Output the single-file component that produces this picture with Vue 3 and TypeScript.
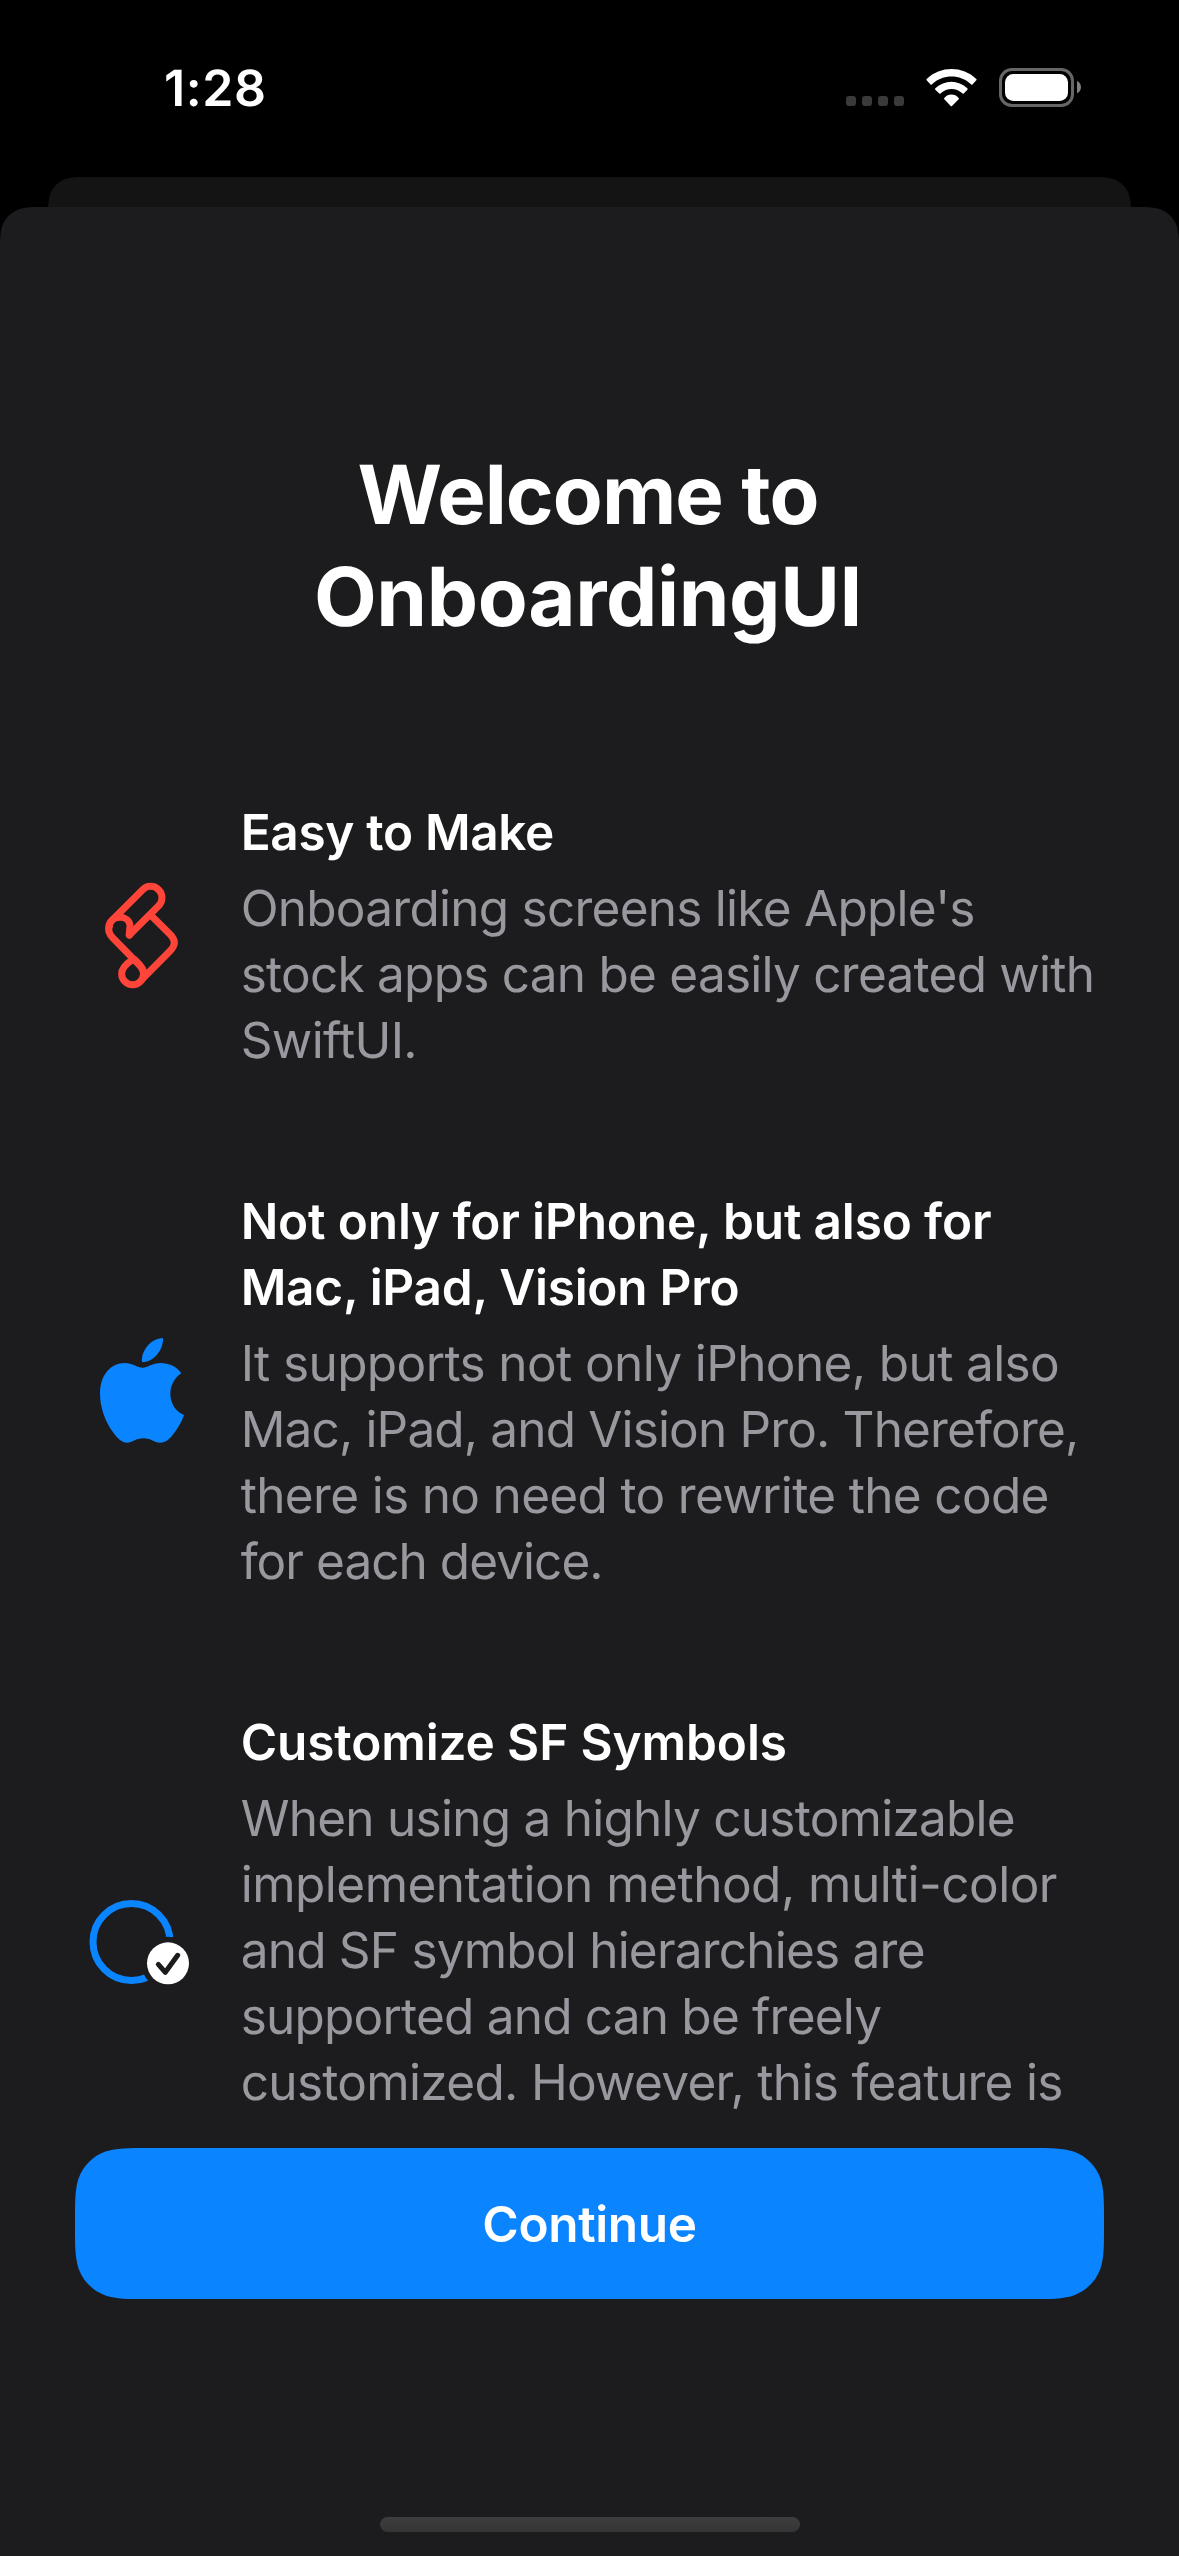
<script setup lang="ts">
interface Line {
  text: string
  tracking: number
}
interface Feature {
  icon: 'scroll' | 'apple' | 'badge'
  title: Line[]
  body: Line[]
}

const heading: Line[] = [
  { text: 'Welcome to', tracking: -0.95 },
  { text: 'OnboardingUI', tracking: -0.36 },
]

const features: Feature[] = [
  {
    icon: 'scroll',
    title: [{ text: 'Easy to Make', tracking: -0.32 }],
    body: [
      { text: "Onboarding screens like Apple's", tracking: -0.74 },
      { text: 'stock apps can be easily created with', tracking: -0.75 },
      { text: 'SwiftUI.', tracking: -0.65 },
    ],
  },
  {
    icon: 'apple',
    title: [
      { text: 'Not only for iPhone, but also for', tracking: -0.15 },
      { text: 'Mac, iPad, Vision Pro', tracking: -0.24 },
    ],
    body: [
      { text: 'It supports not only iPhone, but also', tracking: -0.61 },
      { text: 'Mac, iPad, and Vision Pro. Therefore,', tracking: -0.84 },
      { text: 'there is no need to rewrite the code', tracking: -0.66 },
      { text: 'for each device.', tracking: -0.95 },
    ],
  },
  {
    icon: 'badge',
    title: [{ text: 'Customize SF Symbols', tracking: -0.11 }],
    body: [
      { text: 'When using a highly customizable', tracking: -0.75 },
      { text: 'implementation method, multi-color', tracking: -0.51 },
      { text: 'and SF symbol hierarchies are', tracking: -0.78 },
      { text: 'supported and can be freely', tracking: -0.79 },
      { text: 'customized. However, this feature is', tracking: -0.68 },
    ],
  },
]

const track = (line: Line) => ({ letterSpacing: `${line.tracking}px` })

// Continuous-curvature rounded rectangle; the bottom corners are optional.
function smoothRect(w: number, h: number, r: number, bottom: boolean): string {
  const a = 1.52866 * r
  const b = 1.08849 * r
  const c = 0.86841 * r
  const d = 0.63149 * r
  const e = 0.07491 * r
  const f = 0.37282 * r
  const g = 0.16906 * r
  const top =
    `M0 ${a}C0 ${b} 0 ${c} ${e} ${d}C${g} ${f} ${f} ${g} ${d} ${e}C${c} 0 ${b} 0 ${a} 0` +
    `L${w - a} 0C${w - b} 0 ${w - c} 0 ${w - d} ${e}C${w - f} ${g} ${w - g} ${f} ${w - e} ${d}C${w} ${c} ${w} ${b} ${w} ${a}`
  const end = bottom
    ? `L${w} ${h - a}C${w} ${h - b} ${w} ${h - c} ${w - e} ${h - d}C${w - g} ${h - f} ${w - f} ${h - g} ${w - d} ${h - e}C${w - c} ${h} ${w - b} ${h} ${w - a} ${h}` +
      `L${a} ${h}C${b} ${h} ${c} ${h} ${d} ${h - e}C${f} ${h - g} ${g} ${h - f} ${e} ${h - d}C0 ${h - c} 0 ${h - b} 0 ${h - a}Z`
    : `L${w} ${h}L0 ${h}Z`
  return `path('${top}${end}')`
}

const backClip = { clipPath: smoothRect(1083, 60, 27.6, false) }
const sheetClip = { clipPath: smoothRect(1179, 2349, 30, false) }
const buttonClip = { clipPath: smoothRect(1029, 151, 48, true) }
</script>

<template>
  <div class="screen">
    <header class="status">
      <span class="time">1:28</span>
      <svg class="indicators" width="240" height="46" viewBox="0 0 720 138">
        <g fill="#3a3a3a">
          <rect v-for="x in [0, 48, 96, 144]" :key="x" :x="x + 3" y="93" width="30" height="30" rx="9" />
        </g>
        <g fill="#fff" transform="translate(-135 -105)">
          <path d="M380 147C421 107 488 107 529 147Q531 149 529 151L518 163Q516 166 513 163C480 132 429 132 396 163Q393 166 391 163L380 151Q378 149 380 147Z" />
          <path d="M406 175C433 149 475 149 502 175Q504 177 502 179L492 190Q490 193 487 190C468 173 441 173 422 190Q419 193 417 190L406 179Q404 177 406 175Z" />
          <path d="M433 204C444 190 465 190 476 204Q478 206 476 208L456 228Q454 230 452 228L433 208Q431 206 433 204Z" />
        </g>
        <g transform="translate(-135 -105)">
          <rect x="601.5" y="118.500" width="216" height="108" rx="34" fill="none" stroke="#666" stroke-width="9" />
          <rect x="615" y="132" width="189" height="81" rx="25" fill="#fff" />
          <path d="M831 153C847 159 847 184 831 190Z" fill="#808080" />
        </g>
      </svg>
    </header>

    <div class="back-card" :style="backClip"></div>

    <main class="sheet" :style="sheetClip">
      <h1 class="heading">
        <span v-for="line in heading" :key="line.text" class="line" :style="track(line)">{{ line.text }}</span>
      </h1>

      <section class="features">
        <article v-for="item in features" :key="item.icon" class="feature" :class="item.icon">
          <div class="icon">
            <svg v-if="item.icon === 'scroll'" width="130" height="150" viewBox="0 0 390 450">
              <g fill="none" stroke="#ff453a" stroke-width="21" stroke-linecap="round" stroke-linejoin="round">
                <path d="M148 225L236 137A33.500 33.500 0 0 0 188 89L97 180C82 194 82 216 97 232L181 318C192 330 191 341 190 344" />
                <path d="M88 200C89 163 149 163 150 198C150 206 147 214 148 225" />
                <path d="M215 168L270 223C287 240 287 256 270 273L183 361" stroke-linecap="butt" />
                <path d="M157 299C147 306 125 319 125 341A33 33 0 0 0 191 341C191 328 178 312 164 299" />
              </g>
            </svg>
            <svg v-else-if="item.icon === 'apple'" width="130" height="150" viewBox="0 0 390 450">
              <g fill="#0a84ff">
                <path d="M249 54C250 72 243 90 231 104C219 118 202 127 186 126C184 108 191 91 203 77C215 63 232 55 249 54Z" />
                <path d="M304 160C290 139 266 129 242 129C218 129 203 143 188 143C172 143 158 129 134 129C94 129 60 163 60 222C60 262 76 304 97 334C114 358 126 368 141 368C157 368 167 355 190 355C214 355 222 368 240 368C260 368 271 355 287 333C300 314 308 298 312 285C288 275 271 251 271 221C271 196 284 173 304 160Z" />
              </g>
            </svg>
            <svg v-else width="140" height="130" viewBox="0 0 420 390">
              <circle cx="184.500" cy="186" r="115.500" fill="none" stroke="#0a84ff" stroke-width="21" />
              <circle cx="294" cy="250" r="79.500" fill="#1c1c1e" />
              <circle cx="294" cy="250" r="63" fill="#fff" />
              <path d="M265 253L286 277L323 226" fill="none" stroke="#1c1c1e" stroke-width="15" stroke-linecap="round" stroke-linejoin="round" />
            </svg>
          </div>
          <div class="copy">
            <h2 class="title">
              <span v-for="line in item.title" :key="line.text" class="line" :style="track(line)">{{ line.text }}</span>
            </h2>
            <p class="body">
              <span v-for="line in item.body" :key="line.text" class="line" :style="track(line)">{{ line.text }}</span>
            </p>
          </div>
        </article>
      </section>

      <footer class="footer">
        <button class="continue" :style="buttonClip" type="button">Continue</button>
        <div class="home"></div>
      </footer>
    </main>
  </div>
</template>

<style>
body {
  margin: 0;
  background: #000;
}
</style>

<style scoped>
.screen {
  display: flex;
  flex-direction: column;
  align-items: center;
  width: 1179px;
  height: 2556px;
  overflow: hidden;
  background: #000;
  color: #fff;
  font-family: Inter, 'Liberation Sans', sans-serif;
  text-rendering: geometricPrecision;
}
.status {
  box-sizing: border-box;
  display: flex;
  flex: none;
  justify-content: space-between;
  align-items: flex-start;
  width: 100%;
  height: 177px;
  padding: 58px 94px 0 164px;
}
.time {
  margin-top: 1px;
  font-size: 50px;
  font-weight: 600;
  line-height: 60px;
  letter-spacing: 0.6px;
}
.indicators {
  margin-top: 7px;
}
.back-card {
  flex: none;
  width: 1083px;
  height: 60px;
  margin-bottom: -30px;
  background: #141414;
}
.sheet {
  box-sizing: border-box;
  display: flex;
  flex: none;
  flex-direction: column;
  width: 100%;
  height: 2349px;
  padding-top: 237px;
  background: #1c1c1e;
}
.heading {
  margin: 0;
  padding-right: 3px;
  font-size: 81.5px;
  font-weight: 700;
  line-height: 102px;
  text-align: center;
}
.line {
  display: block;
  white-space: nowrap;
}
.features {
  display: flex;
  flex-direction: column;
  gap: 115px;
  height: 1349px;
  margin-top: 151px;
  overflow: hidden;
}
.feature {
  display: flex;
  flex: none;
}
.icon {
  display: flex;
  flex: none;
  align-items: center;
  justify-content: flex-end;
  width: 210px;
  margin-right: 30.7px;
}
.scroll .icon {
  padding-bottom: 2px;
}
.apple .icon {
  padding-top: 8px;
}
.badge {
  min-height: 472px;
}
.title,
.body {
  margin: 0;
  font-size: 49.5px;
  line-height: 66px;
}
.title {
  font-weight: 600;
}
.body {
  margin-top: 10px;
  color: #98989f;
  font-weight: 400;
}
.footer {
  display: flex;
  flex: 1;
  flex-direction: column;
  align-items: center;
  justify-content: space-between;
  padding-bottom: 24px;
}
.continue {
  width: 1029px;
  height: 151px;
  padding: 1px 0 0;
  border: 0;
  background: #0a84ff;
  color: #fff;
  font: inherit;
  font-size: 49.5px;
  font-weight: 600;
  letter-spacing: -0.35px;
}
.home {
  width: 420px;
  height: 15px;
  border-radius: 8px;
  background: linear-gradient(#3d3d3d, #353535);
}
</style>
